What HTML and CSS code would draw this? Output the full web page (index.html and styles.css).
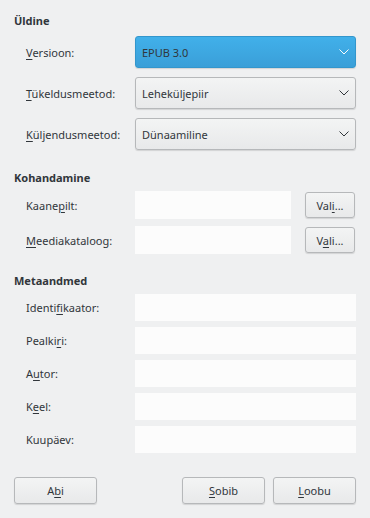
FILE: index.html
```html
<!DOCTYPE html>
<html lang="et">
<head>
  <meta charset="UTF-8">
  <title>EPUB eksport</title>
  <link rel="stylesheet" href="styles.css">
</head>
<body>
  <div class="dialog">
    <h2 class="section-title first">Üldine</h2>
    <div class="rows combos">
      <div class="row">
        <label><u>V</u>ersioon:</label>
        <div class="combo active">
          <span>EPUB 3.0</span>
          <svg width="10" height="6" viewBox="0 0 10 6"><path d="M0.5 0.5 L5 5 L9.5 0.5" fill="none" stroke="#fcfcfc" stroke-width="1"/></svg>
        </div>
      </div>
      <div class="row">
        <label><u>T</u>ükeldusmeetod:</label>
        <div class="combo">
          <span>Leheküljepiir</span>
          <svg width="10" height="6" viewBox="0 0 10 6"><path d="M0.5 0.5 L5 5 L9.5 0.5" fill="none" stroke="#31363b" stroke-width="1"/></svg>
        </div>
      </div>
      <div class="row">
        <label><u>K</u>üljendusmeetod:</label>
        <div class="combo">
          <span>Dünaamiline</span>
          <svg width="10" height="6" viewBox="0 0 10 6"><path d="M0.5 0.5 L5 5 L9.5 0.5" fill="none" stroke="#31363b" stroke-width="1"/></svg>
        </div>
      </div>
    </div>

    <h2 class="section-title">Kohandamine</h2>
    <div class="rows pickers">
      <div class="row">
        <label>Kaane<u>p</u>ilt:</label>
        <div class="field-with-btn">
          <div class="text-field"></div>
          <button class="btn small">Val<u>i</u>...</button>
        </div>
      </div>
      <div class="row">
        <label><u>M</u>eediakataloog:</label>
        <div class="field-with-btn">
          <div class="text-field"></div>
          <button class="btn small">V<u>a</u>li...</button>
        </div>
      </div>
    </div>

    <h2 class="section-title">Metaandmed</h2>
    <div class="rows meta">
      <div class="row">
        <label>Identi<u>fi</u>kaator:</label>
        <div class="text-field"></div>
      </div>
      <div class="row">
        <label>Pealki<u>r</u>i:</label>
        <div class="text-field"></div>
      </div>
      <div class="row">
        <label>A<u>u</u>tor:</label>
        <div class="text-field"></div>
      </div>
      <div class="row">
        <label>K<u>e</u>el:</label>
        <div class="text-field"></div>
      </div>
      <div class="row">
        <label>Kuupäev:</label>
        <div class="text-field"></div>
      </div>
    </div>

    <div class="footer">
      <button class="btn wide">A<u>b</u>i</button>
      <div class="footer-right">
        <button class="btn wide"><u>S</u>obib</button>
        <button class="btn wide"><u>L</u>oobu</button>
      </div>
    </div>
  </div>
</body>
</html>
```

FILE: styles.css
```css
* {
  margin: 0;
  padding: 0;
  box-sizing: border-box;
}
body {
  font-family: 'Noto Sans', sans-serif;
  font-size: 11px;
  color: #31363b;
  background: #eff0f1;
  width: 370px;
  height: 518px;
}
.dialog {
  padding: 13px 14px 0 14px;
  display: flex;
  flex-direction: column;
}
.section-title {
  font-size: 11px;
  font-weight: 700;
  line-height: 16px;
  margin-top: 20px;
  margin-bottom: 5px;
}
.section-title.first {
  margin-top: 0;
  margin-bottom: 7px;
}
.section-title + .rows.pickers {
  margin-top: 0;
}
.rows {
  display: flex;
  flex-direction: column;
  padding-left: 12px;
}
.combos { gap: 9px; }
.pickers { gap: 7px; }
.meta { gap: 6px; }
.meta + .footer { margin-top: 24px; }
.pickers + .section-title { margin-top: 19px; }
.row {
  display: grid;
  grid-template-columns: 109px 1fr;
  align-items: center;
}
label u, button u {
  text-decoration: underline;
  text-underline-offset: 2px;
}
.combo {
  height: 32px;
  border: 1px solid #b6b8ba;
  border-radius: 3px;
  background: linear-gradient(#f3f4f4, #e8e9ea);
  box-shadow: 0 1px 1px rgba(0, 0, 0, 0.12);
  display: flex;
  align-items: center;
  justify-content: space-between;
  padding: 0 6px 0 6px;
}
.combo.active {
  background: linear-gradient(#41b0ea, #3a9fd8);
  border-color: #3396cc;
}
.text-field {
  height: 28px;
  background: #fcfcfc;
}
.meta .text-field {
  height: 27px;
}
.field-with-btn {
  display: flex;
  align-items: center;
  gap: 14px;
}
.field-with-btn .text-field {
  flex: 1;
}
.btn {
  font-family: 'Noto Sans', sans-serif;
  font-size: 11px;
  color: #31363b;
  border: 1px solid #b6b8ba;
  border-radius: 3px;
  background: linear-gradient(#f3f4f4, #e8e9ea);
  box-shadow: 0 1px 1px rgba(0, 0, 0, 0.12);
}
.btn.small {
  width: 50px;
  height: 26px;
  margin-right: 1px;
}
.btn.wide {
  width: 83px;
  height: 27px;
}
.footer {
  display: flex;
  justify-content: space-between;
}
.footer-right {
  display: flex;
  gap: 8px;
}
```
